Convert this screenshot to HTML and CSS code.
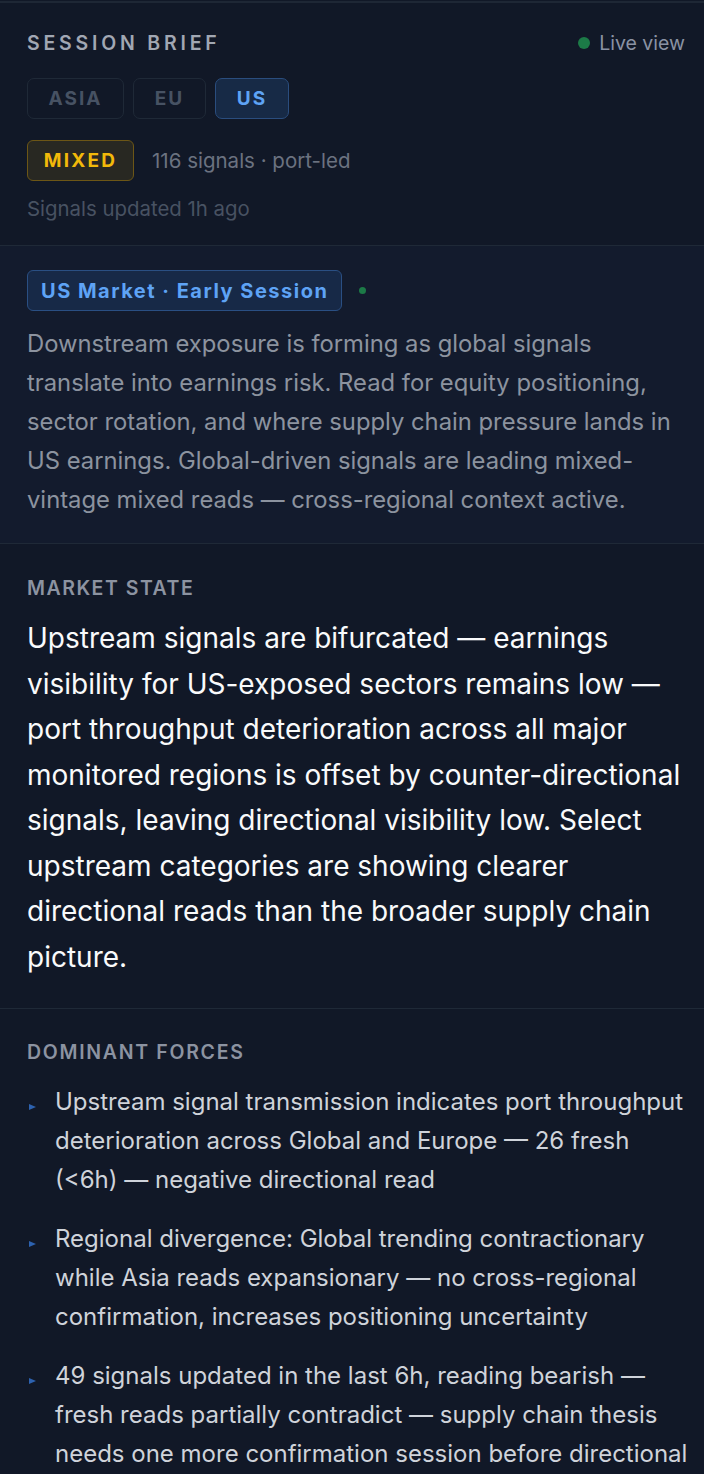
FILE: index.html
```html
<!DOCTYPE html>
<html lang="en">
<head>
<meta charset="utf-8">
<title>Session Brief</title>
<link rel="stylesheet" href="styles.css">
</head>
<body>
<div class="page">
  <section class="sec sec-brief">
    <div class="brief-head">
      <h2 class="eyebrow eyebrow-wide">SESSION BRIEF</h2>
      <div class="live"><span class="live-dot"></span>Live view</div>
    </div>
    <div class="tabs">
      <button class="tab tab-asia">ASIA</button>
      <button class="tab tab-eu">EU</button>
      <button class="tab tab-active">US</button>
    </div>
    <div class="status-row">
      <span class="badge-mixed">MIXED</span>
      <span class="status-meta">116 signals · port-led</span>
    </div>
    <div class="updated">Signals updated 1h ago</div>
  </section>

  <section class="sec sec-context">
    <div class="context-head">
      <span class="badge-session">US Market · Early Session</span>
      <span class="mini-dot"></span>
    </div>
    <p class="context-text">Downstream exposure is forming as global signals translate into earnings risk. Read for equity positioning, sector rotation, and where supply chain pressure lands in US earnings. Global-driven signals are leading mixed-vintage mixed reads — cross-regional context active.</p>
  </section>

  <section class="sec sec-state">
    <h3 class="eyebrow">MARKET STATE</h3>
    <p class="state-text">Upstream signals are bifurcated — earnings visibility for US-exposed sectors remains low — port throughput deterioration across all major monitored regions is offset by counter-directional signals, leaving directional visibility low. Select upstream categories are showing clearer directional reads than the broader supply chain picture.</p>
  </section>

  <section class="sec sec-forces">
    <h3 class="eyebrow eyebrow-forces">DOMINANT FORCES</h3>
    <ul class="forces">
      <li class="force"><span class="tri"></span><span class="force-text">Upstream signal transmission indicates port throughput deterioration across Global and Europe — 26 fresh (&lt;6h) — negative directional read</span></li>
      <li class="force"><span class="tri"></span><span class="force-text">Regional divergence: Global trending contractionary while Asia reads expansionary — no cross-regional confirmation, increases positioning uncertainty</span></li>
      <li class="force"><span class="tri"></span><span class="force-text">49 signals updated in the last 6h, reading bearish — fresh reads partially contradict — supply chain thesis needs one more confirmation session before directional conviction is warranted</span></li>
    </ul>
  </section>
</div>
</body>
</html>
```

FILE: styles.css
```css
* { box-sizing: border-box; }
html, body {
  margin: 0;
  padding: 0;
  background: #111827;
}
body {
  padding-top: 1px;
  font-family: Inter, "Noto Sans", "Liberation Sans", sans-serif;
  color: #d1d5db;
}
.page {
  border-top: 2px solid #1e2735;
}
.sec {
  padding: 0 16px 0 27px;
  border-bottom: 1px solid #1f2937;
}
.eyebrow {
  margin: 0;
  font-size: 19.5px;
  line-height: 22px;
  font-weight: 600;
  letter-spacing: 1.5px;
  color: #8c93a1;
}
.eyebrow-wide {
  letter-spacing: 3.8px;
  color: #a1a7b3;
}
.eyebrow-forces {
  letter-spacing: 1.7px;
}

/* Section 1 */
.sec-brief {
  padding-top: 29px;
  padding-bottom: 25px;
}
.brief-head {
  display: flex;
  justify-content: space-between;
  align-items: center;
  height: 22px;
}
.live {
  display: flex;
  align-items: center;
  gap: 9px;
  font-size: 19.5px;
  color: #8a92a3;
  margin-right: 3px;
}
.live-dot {
  width: 12px;
  height: 12px;
  border-radius: 50%;
  background: #1c7a47;
}
.tabs {
  display: flex;
  gap: 9px;
  margin-top: 24px;
}
.tab {
  height: 41px;
  padding: 0;
  border: 1.5px solid #1f2937;
  border-radius: 7px;
  background: transparent;
  font-family: inherit;
  font-size: 19px;
  font-weight: 700;
  letter-spacing: 2px;
  color: #475263;
}
.tab-asia { width: 97px; }
.tab-eu { width: 73px; }
.tab-active {
  width: 74px;
  background: #172a46;
  border-color: #2a4d7e;
  color: #5ea3f5;
}
.status-row {
  display: flex;
  align-items: center;
  gap: 18px;
  margin-top: 21px;
}
.badge-mixed {
  display: inline-flex;
  align-items: center;
  justify-content: center;
  width: 107px;
  height: 41px;
  border: 1.5px solid #6c5616;
  border-radius: 6px;
  background: #282822;
  font-size: 19px;
  font-weight: 700;
  letter-spacing: 2.2px;
  color: #f2b90a;
}
.status-meta {
  font-size: 20.5px;
  color: #6b7280;
}
.updated {
  margin-top: 17px;
  font-size: 20.4px;
  line-height: 22px;
  color: #485262;
}

/* Section 2 */
.sec-context {
  background: #131b2d;
  padding-top: 24px;
  padding-bottom: 24px;
}
.context-head {
  display: flex;
  align-items: center;
  gap: 17px;
}
.badge-session {
  display: inline-flex;
  align-items: center;
  height: 41px;
  padding: 0 13px;
  border: 1.5px solid #2a4f83;
  border-radius: 6px;
  background: #172947;
  font-size: 20px;
  font-weight: 700;
  letter-spacing: 1.5px;
  color: #5ea3f5;
}
.mini-dot {
  width: 7px;
  height: 7px;
  border-radius: 50%;
  background: #1c7a47;
}
.context-text {
  margin: 13px 0 0;
  font-size: 23.8px;
  line-height: 39px;
  color: #8c939f;
}

/* Section 3 */
.sec-state {
  padding-top: 33px;
  padding-bottom: 28px;
}
.state-text {
  margin: 17px 0 0;
  font-size: 28px;
  line-height: 45.5px;
  font-weight: 400;
  color: #f9fafb;
}

/* Section 4 */
.sec-forces {
  padding-top: 32px;
  border-bottom: none;
}
.forces {
  list-style: none;
  margin: 19px 0 0;
  padding: 0;
  display: flex;
  flex-direction: column;
  gap: 20px;
}
.force {
  display: flex;
  align-items: flex-start;
}
.tri {
  flex: none;
  width: 0;
  height: 0;
  margin: 22px 19px 0 2px;
  border-top: 3.5px solid transparent;
  border-bottom: 3.5px solid transparent;
  border-left: 7px solid #2d62b0;
}
.force-text {
  font-size: 24px;
  line-height: 39px;
  color: #cfd3da;
}
```
